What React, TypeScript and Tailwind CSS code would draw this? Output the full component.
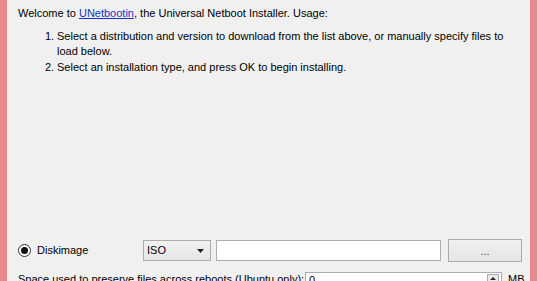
import React from "react";

const App = () => {
  return (
    <div className="w-[537px] h-[281px] overflow-hidden flex bg-[#e5898c] px-[7px] font-['Liberation_Sans',sans-serif] text-[11px] text-black">
      <div className="flex-1 flex flex-col bg-[#f0f0f0] pl-[11px] pt-[6px]">
        {/* Usage text */}
        <p className="leading-[15px]">
          Welcome to <span className="text-[#1330c8] underline">UNetbootin</span>, the Universal Netboot Installer. Usage:
        </p>
        <ol className="mt-[8px] ml-[27px] leading-[15px]">
          <li className="flex">
            <span className="w-[12px] shrink-0">1.</span>
            <span className="w-[448px]">
              Select a distribution and version to download from the list above, or manually specify files to load below.
            </span>
          </li>
          <li className="flex mt-[1px]">
            <span className="w-[12px] shrink-0">2.</span>
            <span>Select an installation type, and press OK to begin installing.</span>
          </li>
        </ol>

        <div className="flex-1" />

        {/* Diskimage row */}
        <div className="flex items-center h-[23px]">
          <div className="w-[13px] h-[13px] rounded-full border border-[#333] bg-white flex items-center justify-center">
            <div className="w-[7px] h-[7px] rounded-full bg-[#111]" />
          </div>
          <span className="ml-[6px] w-[106px]">Diskimage</span>
          <div className="w-[68px] h-[21px] border border-[#acacac] bg-gradient-to-b from-[#f2f2f2] to-[#e5e5e5] flex items-center justify-between pl-[3px] pr-[6px]">
            <span>ISO</span>
            <svg width="7" height="4" viewBox="0 0 7 4">
              <path d="M0 0h7L3.5 4z" fill="#222" />
            </svg>
          </div>
          <div className="ml-[5px] w-[225px] h-[21px] border border-[#abadb3] bg-white" />
          <button className="ml-[7px] w-[74px] h-[23px] border border-[#acacac] bg-gradient-to-b from-[#f0f0f0] to-[#e5e5e5] flex items-center justify-center text-[#444] leading-none pt-[2px]">
            ...
          </button>
        </div>

        {/* Persistence row */}
        <div className="flex items-start mt-[10px] h-[9px]">
          <span className="leading-[13px] pt-[1px] w-[287px] whitespace-nowrap">Space used to preserve files across reboots (Ubuntu only):</span>
          <div className="w-[197px] h-[21px] border border-[#abadb3] bg-white flex items-start justify-between pl-[3px] pr-[2px] pt-[1px]">
            <span className="leading-[13px]">0</span>
            <div className="w-[12px] h-[9px] border border-[#acacac] bg-[#eaeaea] flex items-center justify-center">
              <svg width="6" height="3" viewBox="0 0 6 3">
                <path d="M0 3h6L3 0z" fill="#222" />
              </svg>
            </div>
          </div>
          <span className="ml-[6px] leading-[13px] pt-[1px]">MB</span>
        </div>
      </div>
    </div>
  );
};

export default App;
